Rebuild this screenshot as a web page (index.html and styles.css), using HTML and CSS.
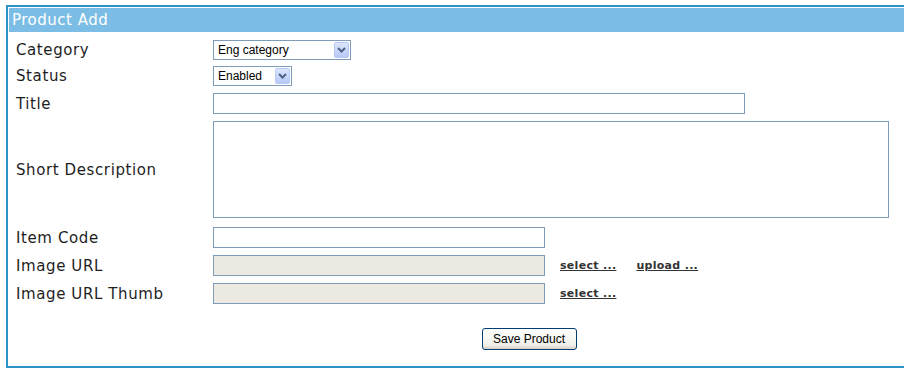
FILE: index.html
```html
<!DOCTYPE html>
<html lang="en">
<head>
<meta charset="UTF-8" />
<title>Product Add</title>
<link rel="stylesheet" href="styles.css">
</head>
<body>

<div class="panel">
<div class="panel-head">Product Add</div>

<form class="form">
<div class="row">
<label class="label">Category</label>
<div class="fake-select cat-select">
<span>Eng category</span>
<span class="arrow"><svg width="9" height="6" viewBox="0 0 9 6"><path d="M1 1 L4.5 4.5 L8 1" fill="none" stroke="#4d6185" stroke-width="2"/></svg></span>
</div>
</div>

<div class="row">
<label class="label">Status</label>
<div class="fake-select status-select">
<span>Enabled</span>
<span class="arrow"><svg width="9" height="6" viewBox="0 0 9 6"><path d="M1 1 L4.5 4.5 L8 1" fill="none" stroke="#4d6185" stroke-width="2"/></svg></span>
</div>
</div>

<div class="row">
<label class="label">Title</label>
<input type="text" class="input title-input">
</div>

<div class="row row-desc">
<label class="label">Short Description</label>
<textarea class="input desc-input"></textarea>
</div>

<div class="row row-code">
<label class="label">Item Code</label>
<input type="text" class="input code-input">
</div>

<div class="row">
<label class="label">Image URL</label>
<input type="text" class="input code-input disabled" disabled>
<a href="#" class="link">select ...</a>
<a href="#" class="link">upload ...</a>
</div>

<div class="row">
<label class="label">Image URL Thumb</label>
<input type="text" class="input code-input disabled" disabled>
<a href="#" class="link">select ...</a>
</div>

<div class="actions">
<button type="button" class="save-btn">Save Product</button>
</div>
</form>
</div>

</body>
</html>
```

FILE: styles.css
```css
* {
box-sizing: border-box;
}

body {
margin: 0;
background: #ffffff;
font-family: "DejaVu Sans", Verdana, sans-serif;
overflow: hidden;
}

.panel {
margin: 5px 0 0 6px;
width: 1046px;
border: 2px solid #2d93c6;
padding: 1px;
}

.panel-head {
height: 24px;
background: #7bbde4;
color: #ffffff;
font-size: 15px;
letter-spacing: 0.5px;
line-height: 24px;
padding-left: 3px;
}

.form {
padding: 8px 0 15px 7px;
}

.row {
display: flex;
align-items: center;
margin-bottom: 6px;
}

.label {
width: 197px;
flex: none;
font-size: 15px;
letter-spacing: 0.6px;
color: #1e1e1e;
}

.fake-select {
height: 20px;
border: 1px solid #7f9db9;
display: flex;
align-items: center;
justify-content: space-between;
padding: 0 1px 0 4px;
font-family: "Liberation Sans", Arial, sans-serif;
font-size: 12px;
color: #000000;
background: #ffffff;
}

.cat-select {
width: 138px;
}

.status-select {
width: 79px;
}

.arrow {
width: 15px;
height: 16px;
border: 1px solid #b7c9f3;
border-radius: 2px;
background: linear-gradient(#dce6fd, #b6c9f6);
display: flex;
align-items: center;
justify-content: center;
}

.input {
display: block;
height: 21px;
border: 1px solid #7f9db9;
background: #ffffff;
margin: 0;
padding: 1px 3px;
font-family: "Liberation Sans", Arial, sans-serif;
font-size: 12px;
}

.title-input {
width: 532px;
}

.desc-input {
width: 676px;
height: 97px;
resize: none;
}

.code-input {
width: 332px;
}

.disabled {
background: #ece9e2;
}

.row:nth-child(2),
.row:nth-child(3),
.row-code,
.row:nth-child(6) {
margin-bottom: 7px;
}

.row-desc {
margin-bottom: 9px;
}

.link {
font-size: 11px;
font-weight: bold;
letter-spacing: 0.3px;
color: #333333;
text-decoration: underline;
margin-left: 15px;
}

.link + .link {
margin-left: 20px;
}

.actions {
text-align: center;
padding-top: 18px;
padding-right: 7px;
}

.save-btn {
width: 95px;
height: 22px;
border: 1px solid #003c74;
border-radius: 3px;
background: linear-gradient(#ffffff, #f0f0ea 80%, #d6d0c5);
font-family: "Liberation Sans", Arial, sans-serif;
font-size: 12px;
color: #000000;
padding: 0;
}
```
